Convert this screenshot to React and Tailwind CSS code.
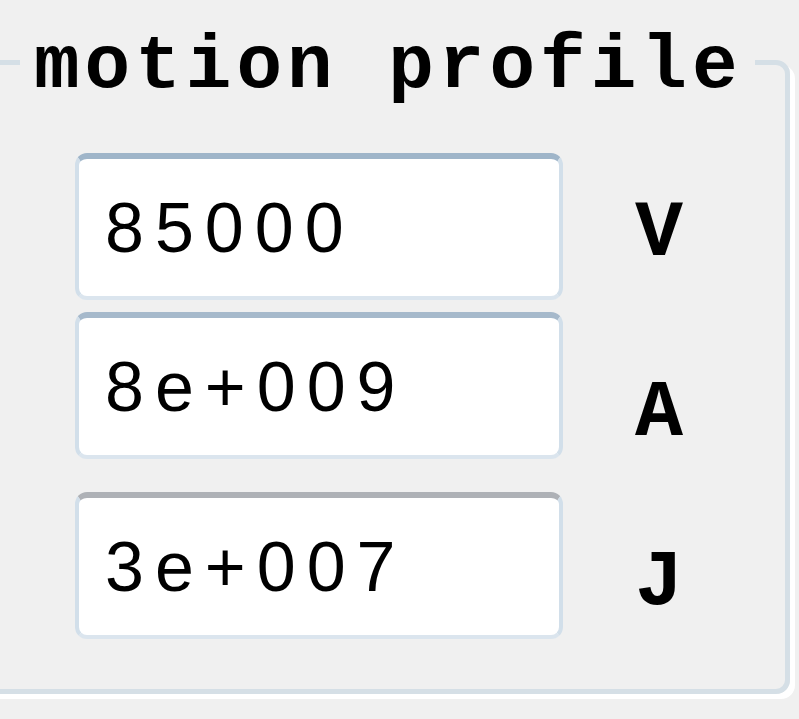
export default function App() {
  const rows = [
    { value: "85000", label: "V", top: "border-t-[#9fb5c9]", gap: "mt-0", labelTop: "mt-[41px]" },
    { value: "8e+009", label: "A", top: "border-t-[#a6b9cb]", gap: "mt-[12px]", labelTop: "mt-[62px]" },
    { value: "3e+007", label: "J", top: "border-t-[#aeb1b6]", gap: "mt-[33px]", labelTop: "mt-[51px]" },
  ];

  return (
    <div className="relative h-[719px] w-[799px] overflow-hidden bg-[#f0f0f0]">
      {/* group box */}
      <div className="relative ml-[-20px] mt-[60px] h-[634px] w-[810px] rounded-[14px] border-[5px] border-[#d5dfe6] pl-[90px] pt-[88px] shadow-[5px_5px_0_0_#ffffff]">
        <span className="absolute left-[35px] top-[-36px] bg-[#f0f0f0] pl-[14px] pr-[12px] font-['Liberation_Mono',monospace] text-[76px] font-bold leading-none tracking-[5px] text-black">
          motion profile
        </span>

        <div className="flex flex-col">
          {rows.map((r) => (
            <div key={r.label} className={`flex items-start ${r.gap}`}>
              <input
                readOnly
                value={r.value}
                className={`h-[147px] w-[488px] rounded-[12px] border-[4px] border-[#d2dfea] border-b-[#dbe5ee] border-t-[6px] ${r.top} bg-white pb-[33px] pl-[26px] pt-[34px] font-['Liberation_Sans',Arial,sans-serif] text-[70px] leading-[70px] tracking-[11px] text-black outline-none`}
              />
              <span
                className={`ml-[68px] w-[56px] text-center font-['Liberation_Mono',monospace] text-[80px] font-bold leading-none text-black ${r.labelTop}`}
              >
                {r.label}
              </span>
            </div>
          ))}
        </div>
      </div>
    </div>
  );
}
